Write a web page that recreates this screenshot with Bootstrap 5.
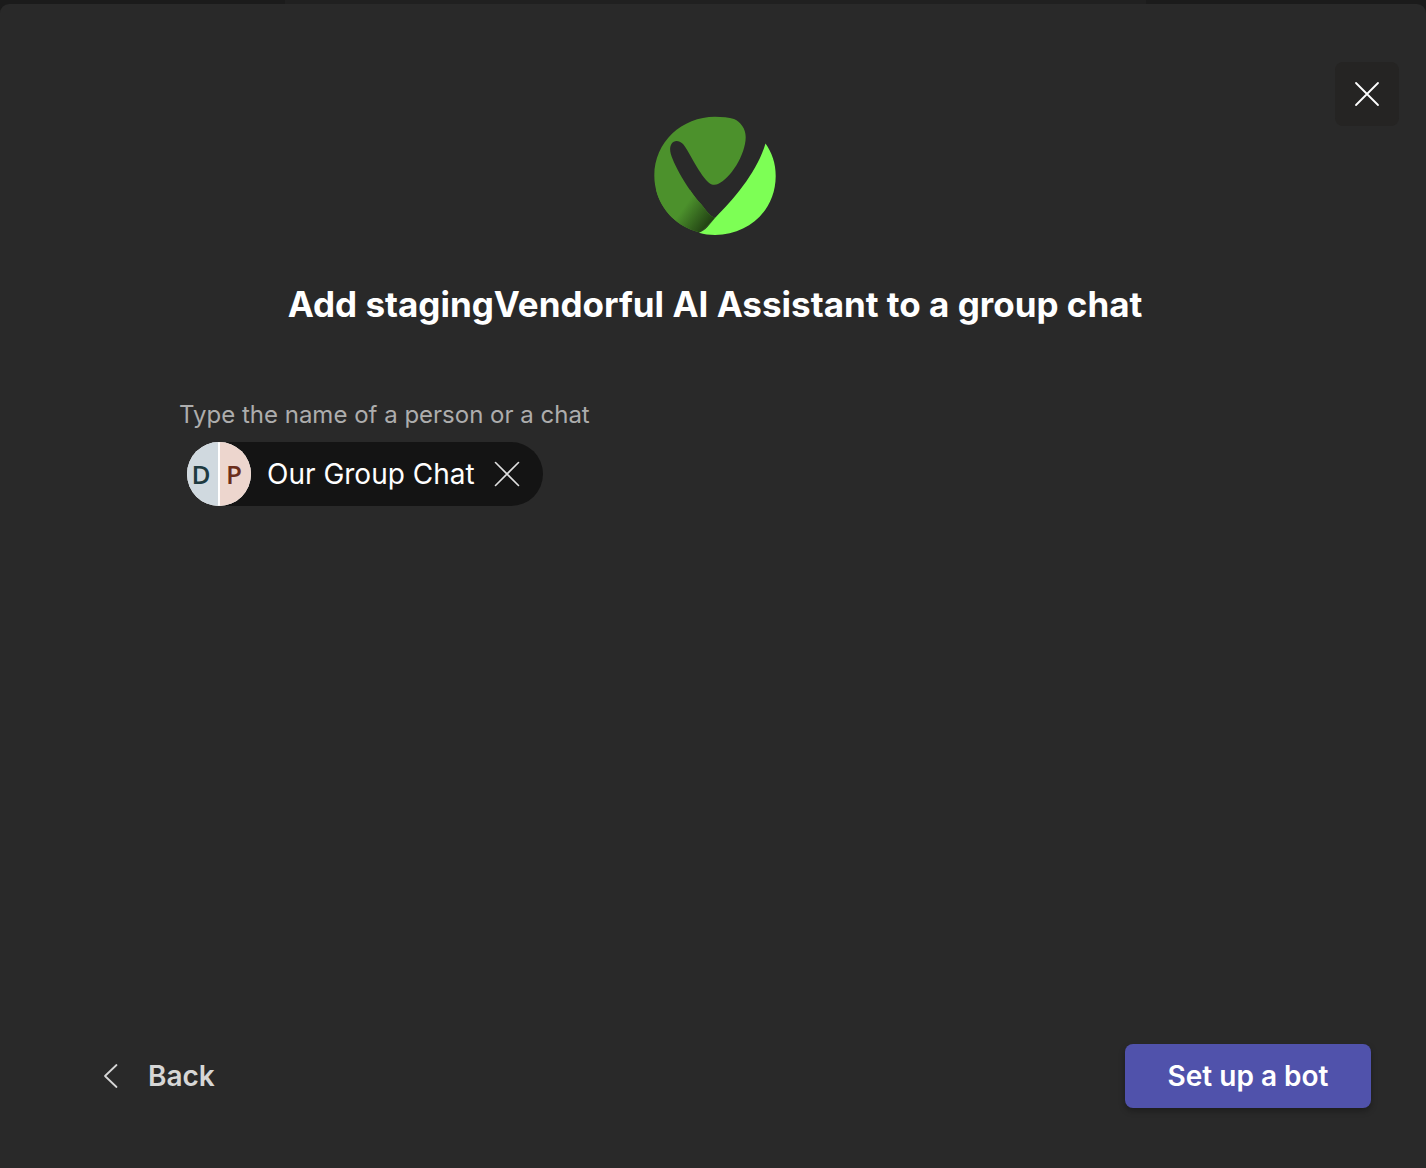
<!DOCTYPE html>
<html lang="en">
<head>
<meta charset="utf-8">
<meta name="viewport" content="width=device-width, initial-scale=1">
<title>Add to a group chat</title>
<link href="https://cdn.jsdelivr.net/npm/bootstrap@5.3.0/dist/css/bootstrap.min.css" rel="stylesheet">
<style>
body { background: #1b1b1b; color: #fff; font-family: Inter, "Liberation Sans", sans-serif; }
.strip { height: 4px; }
.strip-pane { background: #202020; margin: 0 280px 0 285px; }
.dialog { background: #292929; border-radius: 9px 9px 0 0; padding: 58px 27px 60px 28px; }
.dismiss { width: 64px; height: 64px; background: #252423; border: 0; border-radius: 8px; color: #fff; }
.brand { width: 124px; height: 124px; margin-top: -12px; }
.head { padding-left: 3px; }
.heading { font-size: 35px; line-height: 48px; font-weight: 700; margin: 42px 0 0; }
.picker { margin: 71px 151px 0; }
.picker-label { font-size: 24px; line-height: 32px; color: #adadad; margin-bottom: 11px; }
.chip { height: 64px; margin-left: 8px; padding-right: 12px; background: #141414; border-radius: 32px; font-size: 28px; line-height: 36px; }
.avatar { width: 64px; height: 64px; gap: 2px; background: #fff; font-family: "Open Sans", sans-serif; font-size: 26px; line-height: 32px; font-weight: 600; }
.half { flex: 1 1 0; padding-right: 3px; }
.half-d { background: #d0d9df; color: #1e3a40; }
.half-p { background: #edd6ce; color: #6b2e1c; }
.chip-name { padding: 0 8px 0 16px; }
.remove { width: 48px; height: 48px; border: 0; background: none; color: #e0e0e0; }
.entry, .entry:focus { min-width: 0; height: 64px; margin-left: 8px; background: none; border: 0; outline: 0; color: #fff; font-size: 28px; }
.act { font-size: 28px; line-height: 36px; font-weight: 600; height: 64px; }
.back, .back:hover { color: #d6d6d6; padding: 0 8px; margin-left: 60px; gap: 24px; border: 0; }
.setup, .setup:hover { background: #5052ab; color: #fff; border: 0; border-radius: 8px; width: 246px; box-shadow: 0 3px 6px rgba(0,0,0,.3); }
</style>
<script src="https://cdn.jsdelivr.net/npm/bootstrap@5.3.0/dist/js/bootstrap.bundle.min.js"></script>
</head>
<body>
<div class="d-flex flex-column min-vh-100">
  <div class="strip"><div class="strip-pane h-100"></div></div>
  <main class="dialog flex-grow-1 d-flex flex-column">
    <div class="d-flex justify-content-end">
      <button type="button" class="dismiss d-flex align-items-center justify-content-center p-0" aria-label="Close">
        <svg width="26" height="26" viewBox="0 0 26 26" fill="none" stroke="currentColor" stroke-width="1.8" stroke-linecap="round" aria-hidden="true"><path d="M2 2l22 22M24 2l-22 22"/></svg>
      </button>
    </div>
    <div class="head text-center">
      <svg class="brand" viewBox="0 0 124 124" aria-hidden="true">
        <defs>
          <linearGradient id="fold" gradientUnits="userSpaceOnUse" x1="32" y1="92" x2="57" y2="110"><stop offset="0" stop-color="#4c912c"/><stop offset="1" stop-color="#203f12"/></linearGradient>
          <clipPath id="lower"><path d="M0 76h124v48H0z"/></clipPath>
          <path id="leaf" d="M47 118.500C19 112 1.300 88 1.300 61.500C1.300 28 29 2.700 62 2.700C69 2.700 76 3.400 81 5C88 8 92.700 15 92.700 23C92.700 41 77 65 65 70C62 71.500 58 71 55 68C45 58 36 37 30 30C24 24 16 27 17.300 37.500C19 48 35 76 48 90C53 96 57 103 62 103.500Q55 112 47 118.500Z"/>
        </defs>
        <use href="#leaf" fill="#4c912c"/>
        <use href="#leaf" fill="url(#fold)" clip-path="url(#lower)"/>
        <path fill="#7dff55" d="M112.500 29.500C119 39 122.700 49 122.700 62C122.700 96 96 121 62 121C56 121 51 120 46 118.700C52 117 57 110 62 104C82 84 104 58 112.500 29.500Z"/>
      </svg>
      <h1 class="heading">Add stagingVendorful AI Assistant to a group chat</h1>
    </div>
    <div class="picker">
      <label class="picker-label d-block" for="recipient">Type the name of a person or a chat</label>
      <div class="d-flex">
        <div class="chip d-flex align-items-center flex-shrink-0">
          <div class="avatar rounded-circle overflow-hidden d-flex" aria-hidden="true">
            <span class="half half-d d-flex align-items-center justify-content-center">D</span>
            <span class="half half-p d-flex align-items-center justify-content-center">P</span>
          </div>
          <span class="chip-name">Our Group Chat</span>
          <button type="button" class="remove d-flex align-items-center justify-content-center p-0" aria-label="Remove Our Group Chat">
            <svg width="26" height="26" viewBox="0 0 26 26" fill="none" stroke="currentColor" stroke-width="1.6" stroke-linecap="round" aria-hidden="true"><path d="M1.500 1.500l23 23M24.500 1.500l-23 23"/></svg>
          </button>
        </div>
        <input type="text" class="entry flex-grow-1 p-0" id="recipient" autocomplete="off">
      </div>
    </div>
    <footer class="mt-auto d-flex justify-content-between align-items-center pe-1">
      <button type="button" class="btn act back d-flex align-items-center">
        <svg width="28" height="28" viewBox="0 0 28 28" fill="none" stroke="currentColor" stroke-width="1.8" stroke-linecap="round" stroke-linejoin="round" aria-hidden="true"><path d="M20.500 3l-11.500 11l11.500 11"/></svg>
        Back
      </button>
      <button type="button" class="btn act setup me-4">Set up a bot</button>
    </footer>
  </main>
</div>
</body>
</html>
